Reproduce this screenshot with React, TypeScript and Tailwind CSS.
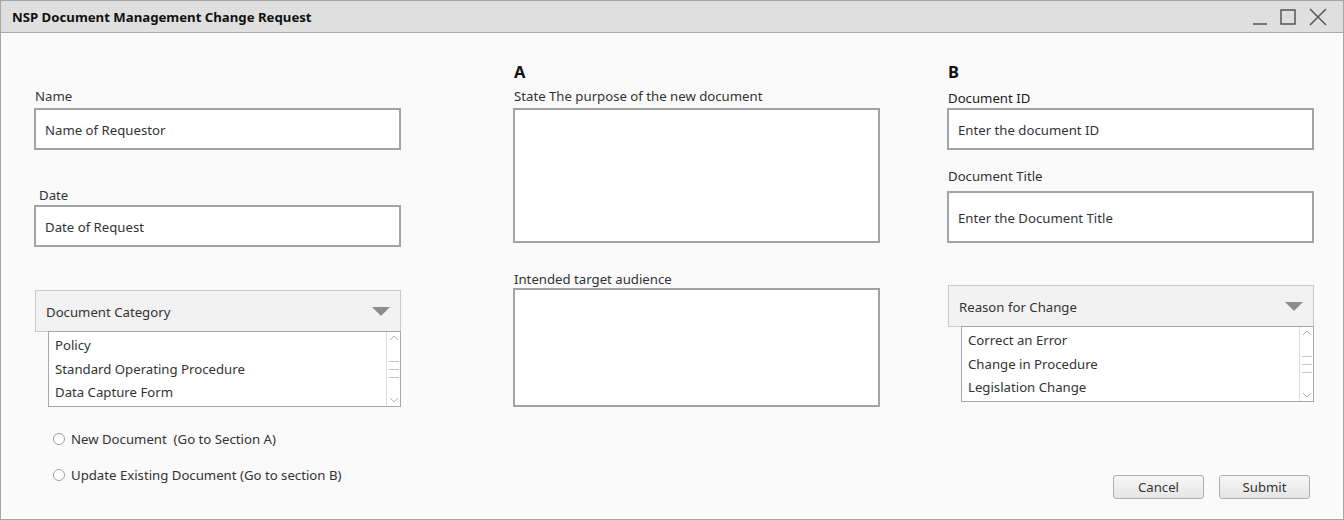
import React from 'react';

const font = { fontFamily: '"Segoe UI", "Noto Sans", "Open Sans", sans-serif' };

function TextBox({ placeholder, h }: { placeholder?: string; h: string }) {
  return (
    <div className={`${h} w-full bg-white border-2 border-[#a3a3a3] flex items-center pl-[9px] pt-[3px] text-[13.2px] text-[#333]`}>
      {placeholder}
    </div>
  );
}

function ListBox({ items }: { items: string[] }) {
  return (
    <div className="h-[76px] bg-white border border-[#a8a8a8] flex">
      <div className="flex-1 pl-[6px] pt-[2px] flex flex-col text-[13.2px] text-[#333] leading-[23.5px]">
        {items.map(i => (
          <span key={i}>{i}</span>
        ))}
      </div>
      <div className="w-[14px] border-l border-[#dcdcdc] flex flex-col items-center justify-between py-[2px]">
        <svg width="10" height="8" viewBox="0 0 10 8">
          <path d="M1 6 L5 2 L9 6" fill="none" stroke="#b5b5b5" strokeWidth="1" />
        </svg>
        <div className="flex flex-col gap-[7px]">
          <div className="w-[10px] h-px bg-[#c4c4c4]" />
          <div className="w-[10px] h-px bg-[#c4c4c4]" />
          <div className="w-[10px] h-px bg-[#c4c4c4]" />
        </div>
        <svg width="10" height="8" viewBox="0 0 10 8">
          <path d="M1 2 L5 6 L9 2" fill="none" stroke="#b5b5b5" strokeWidth="1" />
        </svg>
      </div>
    </div>
  );
}

function DropHeader({ label }: { label: string }) {
  return (
    <div className="h-[42px] bg-[#f2f2f2] border border-[#c9c9c9] flex items-center justify-between pl-[10px] pr-[10px] text-[13.2px] text-[#333]">
      <span className="pt-[3px]">{label}</span>
      <svg width="18" height="9" viewBox="0 0 18 9">
        <path d="M0 0 H18 L9 9 Z" fill="#8c8c8c" />
      </svg>
    </div>
  );
}

function Radio({ label }: { label: string }) {
  return (
    <div className="flex items-center h-[16px] ml-[19px] text-[13.2px] text-[#333]">
      <span className="w-[12px] h-[12px] rounded-full border border-[#a39e97] bg-white mr-[6px]" />
      <span className="whitespace-pre pt-[2px]">{label}</span>
    </div>
  );
}

function Button({ label }: { label: string }) {
  return (
    <div className="w-[91px] h-[24px] rounded-[3px] border border-[#b3aea6] bg-gradient-to-b from-[#f6f6f6] to-[#e6e6e6] flex items-center justify-center pt-px text-[13.2px] text-[#333]">
      {label}
    </div>
  );
}

export default function App() {
  return (
    <div style={font} className="w-[1344px] h-[520px] border border-[#a6a6a6] bg-[#fafafa] flex flex-col overflow-hidden">
      <div className="h-[32px] shrink-0 bg-[#dfdfdf] border-b border-[#ababab] flex items-center justify-between pl-[11px] pr-[16px]">
        <span className="pt-[3px] text-[13.2px] font-bold text-[#111]">NSP Document Management Change Request</span>
        <div className="flex items-center gap-[13px]">
          <svg width="14" height="16" viewBox="0 0 14 16">
            <path d="M0 15 H14" stroke="#555" strokeWidth="1.5" />
          </svg>
          <svg width="16" height="16" viewBox="0 0 16 16">
            <rect x="1" y="1" width="14" height="14" fill="none" stroke="#555" strokeWidth="1.5" />
          </svg>
          <svg width="18" height="18" viewBox="0 0 18 18">
            <path d="M1 1 L17 17 M17 1 L1 17" stroke="#555" strokeWidth="1.5" />
          </svg>
        </div>
      </div>

      <div className="flex pl-[33px] text-[#333]">
        {/* left column */}
        <div className="w-[367px] flex flex-col">
          <div className="mt-[55px] h-[16px] text-[13.2px] leading-[16px] pl-px">Name</div>
          <div className="mt-[4px]"><TextBox h="h-[42px]" placeholder="Name of Requestor" /></div>
          <div className="mt-[37px] h-[16px] text-[13.2px] leading-[16px] pl-[5px]">Date</div>
          <div className="mt-[2px]"><TextBox h="h-[42px]" placeholder="Date of Request" /></div>
          <div className="mt-[43px] ml-px"><DropHeader label="Document Category" /></div>
          <div className="-mt-px ml-[14px]">
            <ListBox items={['Policy', 'Standard Operating Procedure', 'Data Capture Form']} />
          </div>
          <div className="mt-[24px]"><Radio label="New Document  (Go to Section A)" /></div>
          <div className="mt-[20px]"><Radio label="Update Existing Document (Go to section B)" /></div>
        </div>

        {/* section A */}
        <div className="w-[367px] ml-[112px] flex flex-col">
          <div className="mt-[29px] h-[20px] text-[16.5px] font-bold leading-[20px] text-[#111] pl-px">A</div>
          <div className="mt-[6px] h-[16px] text-[13.2px] leading-[16px] pl-px">State The purpose of the new document</div>
          <div className="mt-[4px]"><TextBox h="h-[135px]" /></div>
          <div className="mt-[28px] h-[16px] text-[13.2px] leading-[16px] pl-px">Intended target audience</div>
          <div className="mt-[1px]"><TextBox h="h-[119px]" /></div>
        </div>

        {/* section B */}
        <div className="w-[367px] ml-[67px] flex flex-col">
          <div className="mt-[29px] h-[20px] text-[16.5px] font-bold leading-[20px] text-[#111] pl-px">B</div>
          <div className="mt-[8px] h-[16px] text-[13.2px] leading-[16px] pl-px text-[#1a1a1a]">Document ID</div>
          <div className="mt-[2px]"><TextBox h="h-[42px]" placeholder="Enter the document ID" /></div>
          <div className="mt-[18px] h-[16px] text-[13.2px] leading-[16px] pl-px">Document Title</div>
          <div className="mt-[7px]"><TextBox h="h-[52px]" placeholder="Enter the Document Title" /></div>
          <div className="mt-[42px] ml-px"><DropHeader label="Reason for Change" /></div>
          <div className="-mt-px ml-[14px]">
            <ListBox items={['Correct an Error', 'Change in Procedure', 'Legislation Change']} />
          </div>
          <div className="mt-[73px] flex justify-end gap-[15px] pr-[4px]">
            <Button label="Cancel" />
            <Button label="Submit" />
          </div>
        </div>
      </div>
    </div>
  );
}
